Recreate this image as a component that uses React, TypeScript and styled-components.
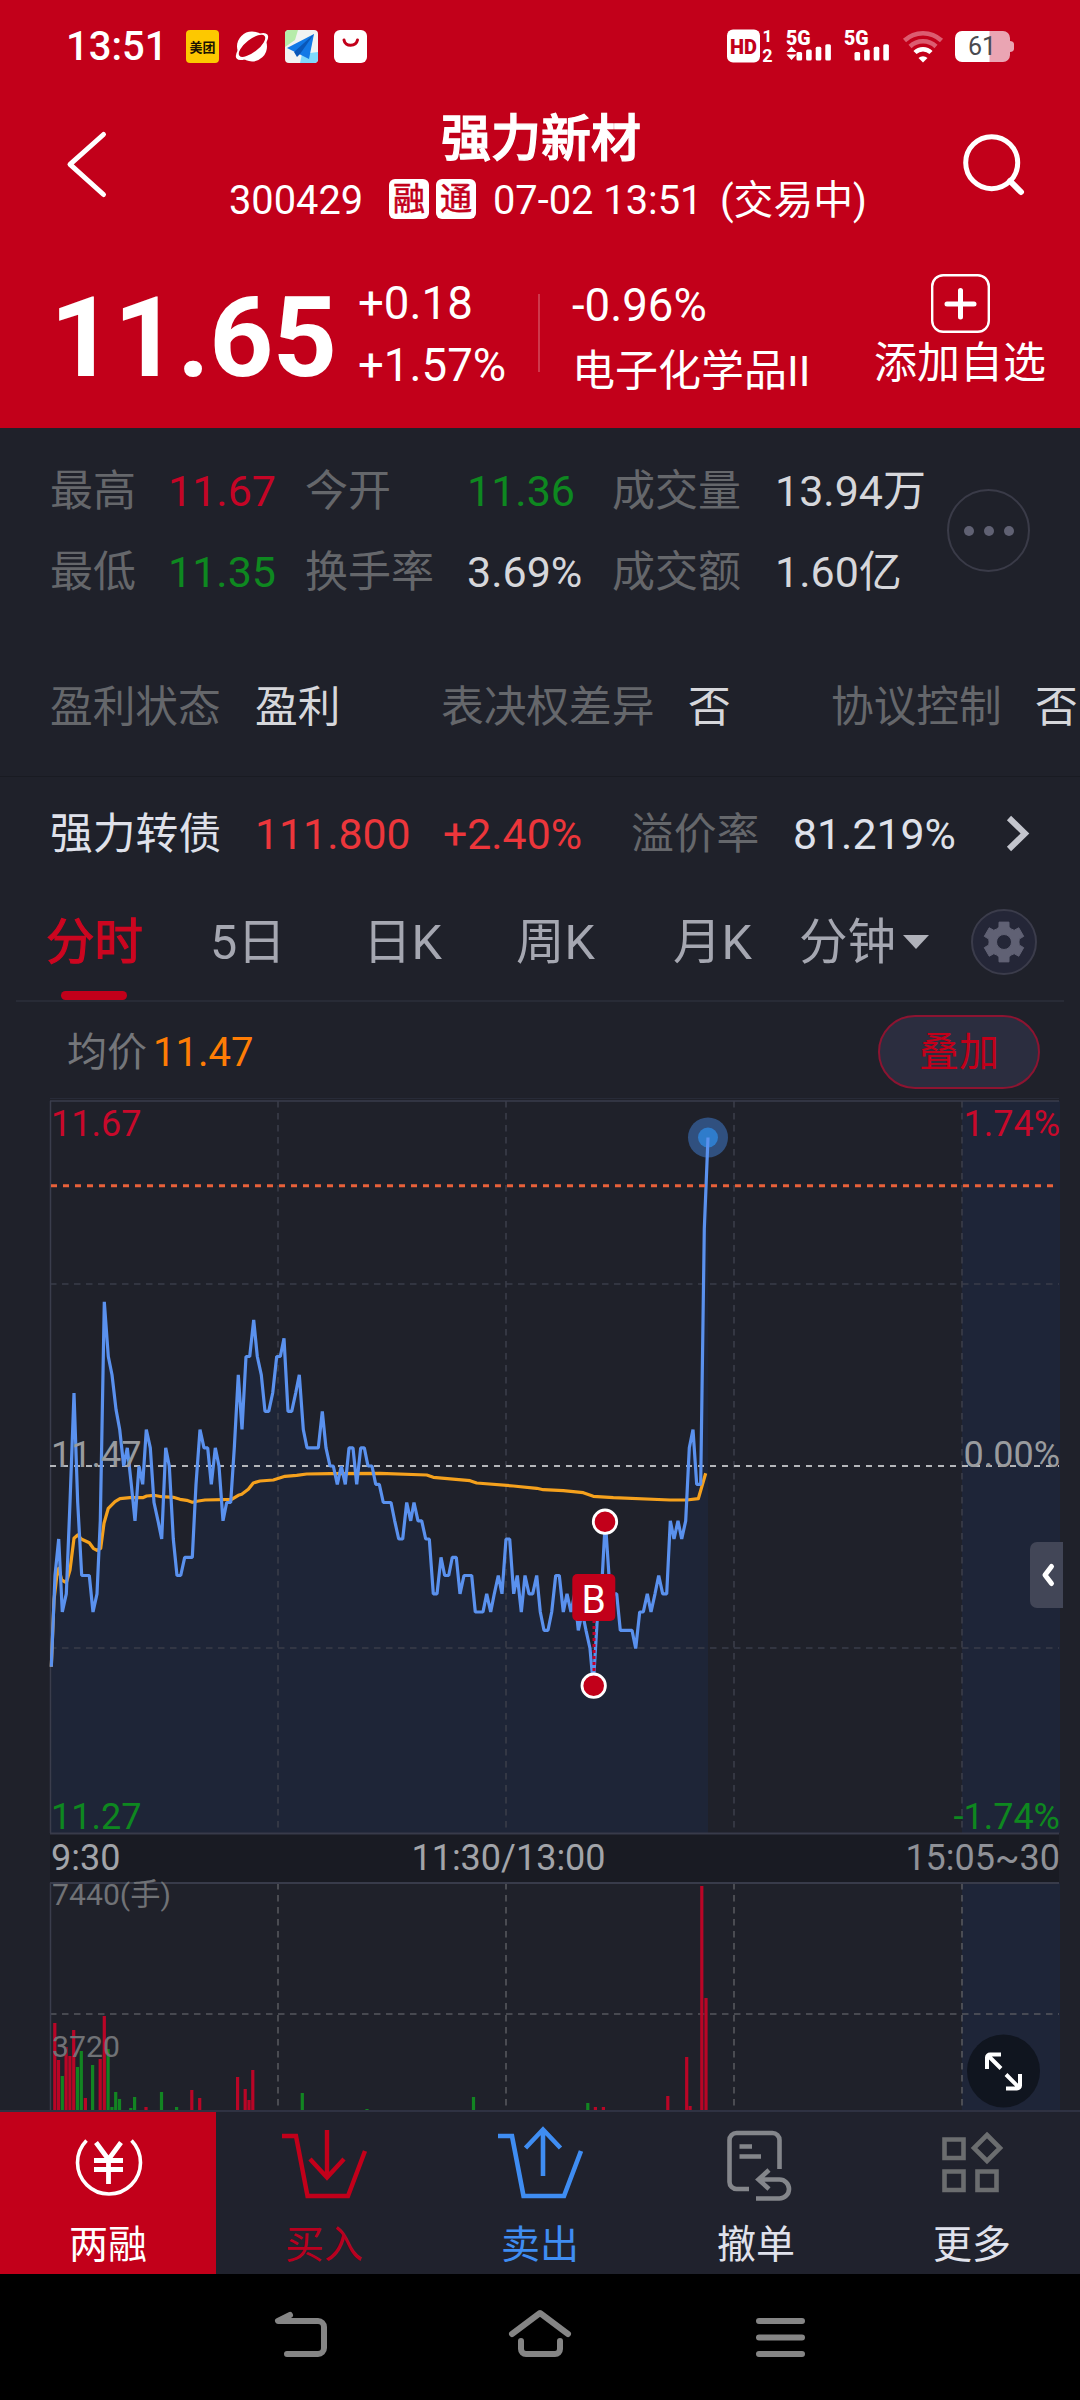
import React from "react";
import styled, { createGlobalStyle } from "styled-components";

const RED = "#c2001a";
const GREEN = "#0e8820";
const BG = "#1f212a";

const Global = createGlobalStyle`
  *, *::before, *::after { box-sizing: border-box; }
  html, body { margin: 0; padding: 0; background: #000; }
  body {
    font-family: Roboto, "Noto Sans CJK SC", sans-serif;
    -webkit-font-smoothing: antialiased;
  }
  svg { display: block; flex: none; overflow: visible; }
`;

const Screen = styled.div`
  width: 1080px;
  height: 2400px;
  display: flex;
  flex-direction: column;
  overflow: hidden;
  background: ${BG};
  color: #d9dae0;
`;

/* ---------- header ---------- */

const Header = styled.header`
  height: 428px;
  background: ${RED};
  color: #fff;
`;

const StatusBar = styled.div`
  height: 90px;
  padding: 2px 66px 0 66px;
  display: flex;
  align-items: center;
  justify-content: space-between;
`;

const StatusGroup = styled.div<{ $gap: number }>`
  display: flex;
  align-items: center;
  gap: ${(p) => p.$gap}px;
`;

const Clock = styled.span`
  width: 104px;
  font-size: 40px;
  font-weight: 500;
  line-height: 50px;
  padding-top: 1px;
`;

const TitleBar = styled.div`
  height: 150px;
  display: grid;
  grid-template-columns: 140px 800px 140px;
`;

const IconSlot = styled.button<{ $pad: string }>`
  border: 0;
  background: none;
  padding: ${(p) => p.$pad};
  display: flex;
  align-items: flex-start;
  justify-content: flex-start;
`;

const TitleBlock = styled.div`
  padding-top: 19px;
  display: flex;
  flex-direction: column;
  gap: 6px;
`;

const Title = styled.h1`
  margin: 0;
  font-size: 50px;
  line-height: 60px;
  font-weight: 500;
  text-align: center;
  padding-left: 2px;
  -webkit-text-stroke: 1.3px #fff;
`;

const SubTitle = styled.div`
  padding-left: 89px;
  display: grid;
  grid-template-columns: 160px 104px 227px 1fr;
  align-items: center;
  font-size: 39.8px;
  line-height: 50px;
  white-space: nowrap;
  & > span { padding-top: 1px; }
`;

const Badges = styled.div`
  display: flex;
  gap: 7px;
  margin-top: -4px;
`;

const Badge = styled.span`
  width: 40px;
  height: 40px;
  border-radius: 6px;
  background: #fff;
  color: ${RED};
  font-size: 32px;
  line-height: 41px;
  text-align: center;
  -webkit-text-stroke: 0.6px ${RED};
`;

const QuoteRow = styled.div`
  display: grid;
  grid-template-columns: 308px 180px 2px 331px 180px;
  padding-left: 50px;
  height: 188px;
  white-space: nowrap;
`;

const Price = styled.div`
  font-size: 112px;
  font-weight: 700;
  line-height: 120px;
  padding-top: 38px;
  letter-spacing: -0.6px;
`;

const QuoteCol = styled.div<{ $top: number; $left: number }>`
  padding: ${(p) => p.$top}px 0 0 ${(p) => p.$left}px;
  display: flex;
  flex-direction: column;
  font-size: 45.6px;
  line-height: 62px;
`;

const Industry = styled.span`
  font-size: 43px;
  line-height: 68px;
`;

const VRule = styled.div`
  margin-top: 54px;
  height: 78px;
  background: rgba(255, 255, 255, 0.22);
`;

const AddButton = styled.button`
  border: 0;
  background: none;
  color: #fff;
  font: inherit;
  font-size: 43px;
  line-height: 50px;
  padding: 34px 2px 0 0;
  display: flex;
  flex-direction: column;
  align-items: center;
  gap: 5px;
`;

/* ---------- stats ---------- */

const Stats = styled.section`
  height: 349px;
  border-bottom: 1px solid #191b22;
`;

const StatGrid = styled.div`
  padding: 22px 50px 0;
  display: grid;
  grid-template-columns: 118px 137px 162px 145px 163px 168px 1fr;
  grid-template-rows: 81px 81px;
  align-items: center;
  font-size: 43px;
  line-height: 50px;
  white-space: nowrap;
`;

const toneColor: Record<string, string> = {
  label: "#65676b",
  plain: "#d6d7db",
  up: "#c50526",
  down: GREEN,
  hot: "#ec363b",
  name: "#dfe1ea",
};

const Cell = styled.span<{ $tone: string }>`
  color: ${(p) => toneColor[p.$tone]};
`;

const MoreButton = styled.button`
  grid-column: 7;
  grid-row: 1 / 3;
  width: 83px;
  height: 83px;
  margin: -1px 0 0 4px;
  padding: 0;
  border-radius: 50%;
  border: 2px solid #3a3b48;
  background: none;
  display: flex;
  align-items: center;
  justify-content: center;
  gap: 10px;
  i { width: 10px; height: 10px; border-radius: 50%; background: #606173; }
`;

const TagRow = styled.div`
  height: 80px;
  margin-top: 55px;
  padding-left: 50px;
  display: grid;
  grid-template-columns: 205px 186px 247px 143px 204px 60px;
  align-items: center;
  font-size: 42.7px;
  line-height: 50px;
  white-space: nowrap;
`;

const BondRow = styled.section`
  height: 113px;
  padding-left: 50px;
  display: grid;
  grid-template-columns: 205px 188px 188px 162px 213px 1fr;
  align-items: center;
  font-size: 42.8px;
  line-height: 50px;
  white-space: nowrap;
`;

/* ---------- tabs ---------- */

const Tabs = styled.nav`
  height: 112px;
  margin: 0 16px;
  border-bottom: 2px solid #282b36;
  display: grid;
  grid-template-columns: 164px 153px 153px 157px 140px 156px 1fr;
  color: #a5a7b1;
  font-size: 48.5px;
  line-height: 106px;
  padding-left: 30px;
  white-space: nowrap;
`;

const Tab = styled.div<{ $active?: boolean }>`
  position: relative;
  color: ${(p) => (p.$active ? "#cc0620" : "inherit")};
  -webkit-text-stroke: ${(p) => (p.$active ? "1.2px #cc0620" : "0")};
  &::after {
    content: "";
    display: ${(p) => (p.$active ? "block" : "none")};
    position: absolute;
    left: 15px;
    bottom: 0;
    width: 66px;
    height: 9px;
    border-radius: 5px;
    background: ${RED};
  }
`;

const DropTab = styled.div`
  display: flex;
  margin-left: -14px;
`;

const Caret = styled.i`
  margin: 45px 0 0 7px;
  width: 0;
  height: 0;
  border-left: 13px solid transparent;
  border-right: 13px solid transparent;
  border-top: 14px solid #b0b2ba;
`;

const GearButton = styled.button`
  width: 66px;
  height: 66px;
  margin: 19px 0 0 2px;
  padding: 0;
  border-radius: 50%;
  border: 2px solid #3b3c4b;
  background: #242637;
  display: flex;
  align-items: center;
  justify-content: center;
`;

/* ---------- chart ---------- */

const ChartHead = styled.div`
  height: 96px;
  padding: 3px 40px 0 67px;
  display: flex;
  align-items: center;
  font-size: 40px;
  line-height: 50px;
`;

const AvgLabel = styled.span`
  width: 86px;
  padding-top: 3px;
  color: #74767a;
`;

const AvgValue = styled.span`
  flex: 1;
  padding-top: 3px;
  color: #ff7d05;
`;

const Overlay = styled.button`
  width: 162px;
  height: 74px;
  padding: 2px 0 0;
  border-radius: 37px;
  border: 2px solid #8c1431;
  background: #2b2d3f;
  color: ${RED};
  font: inherit;
`;

const ChartBox = styled.section`
  height: 1014px;
`;

const ChartText = styled.text<{ $fill: string; $size?: number }>`
  fill: ${(p) => p.$fill};
  font-size: ${(p) => p.$size ?? 36}px;
`;

/* ---------- bottom ---------- */

const ActionBar = styled.nav`
  height: 162px;
  display: grid;
  grid-template-columns: repeat(5, 1fr);
  background: #20222d;
`;

const Action = styled.button<{ $color: string; $bg?: string }>`
  border: 0;
  padding: 9px 0 0;
  background: ${(p) => p.$bg ?? "none"};
  color: ${(p) => p.$color};
  font: inherit;
  font-size: 39px;
  line-height: 50px;
  display: flex;
  flex-direction: column;
  align-items: center;
  justify-content: flex-start;
  gap: 6px;
`;

const SystemNav = styled.div`
  flex: 1;
  background: #000;
  display: flex;
  justify-content: center;
  gap: 160px;
  padding-top: 24px;
`;

/* ---------- data ---------- */

const MID = 1466;
const TICK = 18.25;

// [x, ticks above previous close]
const priceA: [number, number][] = [
  [64, -11], [75, -6], [86, -4], [97, -8], [109, -7], [120, -2], [132, 4], [143, -2], [155, -6], [178, -6],
  [189, -8], [201, -7], [211, -3], [223, 9], [235, 6], [246, 5], [258, 3.1], [269, 2], [281, 0], [292, 1],
  [304, -1], [315, -3], [327, 0], [338, -1], [349, 2], [361, 1], [372, -2], [384, -3], [395, -4], [407, 1],
  [418, 0], [430, -4], [441, -6], [452, -6], [464, -5], [487, -5], [498, -1], [510, 2], [522, 1], [533, 1],
  [544, -1], [556, 1], [567, 0], [579, -3], [590, -2], [602, -2], [613, 1], [625, 5], [636, 2], [648, 6],
  [659, 6], [671, 8], [682, 6], [694, 5], [705, 3], [716, 3], [728, 4], [740, 6], [751, 6], [762, 7],
  [774, 3], [785, 3], [797, 4], [808, 5], [820, 2], [831, 1], [865, 1], [877, 3], [888, 1], [900, 0],
  [910, 0], [922, -1], [934, 0], [946, -1], [957, 1], [969, 1], [980, -1], [992, 1], [1003, 1], [1014, 0],
  [1026, 0], [1037, -1], [1048, -1], [1060, -2],
];
const priceB: [number, number][] = [
  [33, -2], [44, -3], [56, -4], [68, -4], [80, -2], [92, -3], [102, -2], [114, -3], [125, -3], [137, -4],
  [148, -4], [160, -7], [171, -7], [183, -5], [194, -6], [206, -6], [217, -5], [229, -5], [240, -7], [252, -6],
  [275, -6], [286, -8], [309, -8], [320, -7], [332, -8], [343, -7], [355, -6], [366, -7], [378, -4], [389, -4],
  [401, -7], [412, -6], [424, -8], [435, -6], [447, -7], [458, -7], [470, -6], [481, -8], [492, -9], [504, -9],
  [515, -8], [527, -6], [538, -6], [550, -8], [561, -7], [573, -8], [584, -7], [595, -9], [607, -8], [618, -9],
  [630, -10], [640, -12], [653, -8], [664, -7], [676, -3], [687, -6], [699, -7], [710, -7], [721, -9], [756, -9],
  [767, -10], [779, -8], [790, -8], [802, -7], [813, -8], [825, -7], [836, -6], [848, -7], [860, -7], [871, -3],
  [882, -4], [894, -3], [905, -4], [917, -3], [928, 1], [939, 2], [950, -1], [962, -1], [973, 13], [984, 18],
];

const avgA: [number, number][] = [
  [64, 1160], [72, 960], [80, 890], [86, 865], [95, 900], [109, 908], [120, 870], [132, 775], [143, 765],
  [155, 778], [178, 788], [190, 805], [201, 811], [212, 805], [222, 730], [235, 685], [255, 665], [270, 656],
  [300, 653], [338, 653], [350, 648], [372, 646], [395, 650], [430, 652], [450, 658], [470, 661], [487, 667],
  [505, 663], [525, 660], [605, 658], [625, 646], [635, 643], [655, 628], [670, 609], [690, 603], [730, 600],
  [765, 589], [800, 586], [830, 582], [900, 581], [1050, 580],
];
const avgB: [number, number][] = [
  [140, 585], [160, 592], [270, 602], [290, 609], [400, 618], [470, 625], [490, 629], [550, 632], [610, 638],
  [640, 649], [700, 653], [870, 660], [920, 660], [955, 656], [977, 580],
];

const toPath = (pts: number[][]) =>
  pts.map(([x, y], i) => `${i ? "L" : "M"}${x.toFixed(1)} ${y.toFixed(1)}`).join("");

const pricePts = [
  ...priceA.map(([x, k]) => [30 + x / 3, MID - k * TICK]),
  ...priceB.map(([x, k]) => [380 + x / 3, MID - k * TICK]),
];
const avgPts = [
  ...avgA.map(([x, y]) => [30 + x / 3, 1280 + y / 3]),
  ...avgB.map(([x, y]) => [380 + x / 3, 1280 + y / 3]),
];

// [x, top, rising]
const volumes: [number, number, boolean][] = [
  [54.8, 2023, true], [58.5, 2060, true], [62.3, 2076, false], [66.1, 2047, true], [69.9, 2056, true],
  [73.7, 2030, true], [77.5, 2067, false], [81.3, 2051, false], [85.4, 2098, true], [92.6, 2065, false],
  [100.2, 2059, true], [104.3, 2016, true], [108.1, 2049, false], [111.9, 2107, false], [115.7, 2092, false],
  [119.5, 2099, false], [130.8, 2108, false], [134.6, 2097, false], [146, 2107, true], [161.5, 2092, false],
  [176.6, 2107, false], [191.8, 2090, true], [199.7, 2098, true], [237.6, 2077, true], [245.2, 2089, true],
  [249, 2100, true], [252.8, 2070, true], [302.3, 2093, false], [367, 2109, false], [473.5, 2097, false],
  [587.8, 2103, false], [595.4, 2107, true], [603.4, 2107, true], [667.8, 2096, true], [686.7, 2057, true],
  [690.1, 2106, true], [701.8, 1886, true], [706, 1998, true],
];

const VLINES = [278, 506, 734, 962];

/* ---------- drawings ---------- */

const Chart = () => (
  <svg width="1080" height="1014" viewBox="0 1098 1080 1014" fontFamily='Roboto, "Noto Sans CJK SC", sans-serif'>
    <rect x="962" y="1101" width="98" height="732" fill="#1e2538" />
    <rect x="962" y="1883" width="98" height="228" fill="#1e2538" />
    <path d={`${toPath(pricePts)}V1833H51Z`} fill="#1e2537" />
    <rect x="50" y="1834" width="1009" height="48" fill="#191b23" />
    <g stroke="#3a3d49" strokeWidth="1.6" strokeDasharray="6.5 5.5">
      {VLINES.map((x) => (
        <path key={x} d={`M${x} 1101V1833`} />
      ))}
      <path d="M50 1284H1059M50 1648H1059" />
    </g>
    <g stroke="#55575d" strokeWidth="1.6" strokeDasharray="6.5 5.5">
      {VLINES.map((x) => (
        <path key={x} d={`M${x} 1883V2110`} />
      ))}
      <path d="M50 2014H1059" />
    </g>
    <path d="M50 1098.5H1059" stroke="#282b38" />
    <path d="M50 1101H1059M50.5 1101V1833M50.5 1883V2110" stroke="#3a3d4c" strokeWidth="1.5" fill="none" />
    <path d="M50 1833.5H1059M50 1883H1059" stroke="#383b4a" strokeWidth="2" />
    <path d="M50 1466H1059" stroke="#b4b6ba" strokeWidth="2" strokeDasharray="6 6" />
    <path d={toPath(avgPts)} fill="none" stroke="#f5a11d" strokeWidth="3.2" strokeLinejoin="round" />
    <circle cx="708" cy="1137.5" r="20" fill="#30507f" />
    <circle cx="708" cy="1137.5" r="10" fill="#2f7ccb" />
    <path d={toPath(pricePts)} fill="none" stroke="#5a91ee" strokeWidth="3.2" strokeLinejoin="bevel" />
    <path d="M51 1185.7H1059" stroke="#e8613a" strokeWidth="3" strokeDasharray="6 6" />
    <ChartText $fill="#999b9e" x="51" y="1467">11.47</ChartText>
    <ChartText $fill="#c8092b" x="51" y="1135.5">11.67</ChartText>
    <ChartText $fill="#c8092b" x="1060" y="1135.5" textAnchor="end">1.74%</ChartText>
    <ChartText $fill="#999b9e" x="1060" y="1467" textAnchor="end">0.00%</ChartText>
    <ChartText $fill={GREEN} x="51" y="1829">11.27</ChartText>
    <ChartText $fill={GREEN} x="1060" y="1829" textAnchor="end">-1.74%</ChartText>
    <path d="M594 1620V1674" stroke="#c2002a" strokeWidth="3" strokeDasharray="3 3" />
    <circle cx="605" cy="1521.7" r="11.7" fill={RED} stroke="#fff" strokeWidth="2.8" />
    <circle cx="593.7" cy="1685.7" r="11.7" fill={RED} stroke="#fff" strokeWidth="2.8" />
    <rect x="572.3" y="1574" width="43" height="47" rx="5" fill={RED} />
    <ChartText $fill="#fff" $size={39} x="593.7" y="1612.5" textAnchor="middle">B</ChartText>
    <path d="M1063 1542H1037a7 7 0 0 0-7 7V1601a7 7 0 0 0 7 7H1063Z" fill="#424657" />
    <path d="M1051.5 1566.5L1045 1575L1051.5 1583.5" fill="none" stroke="#fff" strokeWidth="5" strokeLinecap="round" strokeLinejoin="round" />
    <ChartText $fill="#a2a4a9" x="51" y="1869.5">9:30</ChartText>
    <ChartText $fill="#a2a4a9" x="508.5" y="1869.5" textAnchor="middle">11:30/13:00</ChartText>
    <ChartText $fill="#8f9197" x="1060" y="1869.5" textAnchor="end">15:05~30</ChartText>
    {volumes.map(([x, y, up]) => (
      <rect key={x} x={x - 1.6} y={y} width="3.2" height={2111 - y} fill={up ? "#b90526" : "#128522"} />
    ))}
    <ChartText $fill="#707276" $size={30.2} x="52" y="1905">7440(手)</ChartText>
    <ChartText $fill="#707276" $size={30.2} x="52" y="2057">3720</ChartText>
    <circle cx="1003.5" cy="2071" r="36.5" fill="#10151f" />
    <path
      d="M1001 2068.5L987 2054.5M1001 2054.5H990a3 3 0 0 0-3 3V2069M1006 2074.5L1020 2088.5M1006 2088.5H1017a3 3 0 0 0 3-3V2074"
      fill="none"
      stroke="#fff"
      strokeWidth="4"
    />
    <path d="M0 2111H1080" stroke="#2f3242" strokeWidth="2" />
  </svg>
);

const Meituan = () => (
  <svg width="33" height="33">
    <rect width="33" height="33" rx="4" fill="#fdc800" />
    <text x="16.5" y="21.5" fontSize="13" fontWeight="700" textAnchor="middle" fill="#1a1200" fontFamily='"Noto Sans CJK SC", sans-serif'>
      美团
    </text>
  </svg>
);

const Planet = () => (
  <svg width="34" height="33" viewBox="0 0 34 33">
    <circle cx="17" cy="16.5" r="15" fill="#fff" />
    <ellipse cx="17" cy="16.5" rx="19.5" ry="8" transform="rotate(-38 17 16.5)" fill="#fff" />
    <ellipse cx="17" cy="15.8" rx="16" ry="6.4" transform="rotate(-38 17 15.8)" fill={RED} />
  </svg>
);

const Maps = () => (
  <svg width="33" height="33" viewBox="0 0 33 33">
    <rect width="33" height="33" rx="4" fill="#f1f3f2" />
    <path d="M4 0H13L10 10L0 17V4A4 4 0 0 1 4 0Z" fill="#b6ecaa" />
    <path d="M17 24L33 22V29a4 4 0 0 1-4 4H15Z" fill="#7fd8fb" />
    <path d="M29 4L2 18L24 29Z" fill="#1379e6" />
    <path d="M29 4L9 22L12 27L15 24Z" fill="#0a57b8" />
  </svg>
);

const Bag = () => (
  <svg width="33" height="33" viewBox="0 0 33 33">
    <rect width="33" height="33" rx="6" fill="#fff" />
    <path d="M10 10C11 17 22 17 23.5 10" fill="none" stroke={RED} strokeWidth="3" strokeLinecap="round" />
  </svg>
);

const Hd = () => (
  <svg width="48" height="40" viewBox="0 -3.5 48 40" fontFamily="Roboto, sans-serif" fontWeight="700" fill="#fff">
    <rect width="33" height="33" rx="6" />
    <text x="16.5" y="24" fontSize="21" fontWeight="900" textAnchor="middle" fill={RED} textLength="27" lengthAdjust="spacingAndGlyphs">HD</text>
    <text x="40.5" y="12.5" fontSize="17" textAnchor="middle">1</text>
    <text x="40.5" y="32" fontSize="18" textAnchor="middle">2</text>
  </svg>
);

const Signal = ({ arrows }: { arrows?: boolean }) => (
  <svg width="46" height="40" viewBox="1 -3.5 46 40" fill="#fff">
    <text x="0" y="15" fontSize="19.5" fontWeight="900" fontFamily="Roboto, sans-serif">5G</text>
    {arrows && <path d="M0.5 22.5L5.5 17L10.5 22.5ZM0.5 25L5.5 30.5L10.5 25Z" />}
    {[0, 1, 2, 3].map((i) => (
      <rect key={i} x={10.5 + i * 9.6} y={22.5 - i * 2.6} width="5.6" height={8.5 + i * 2.6} rx="1.5" />
    ))}
  </svg>
);

const Wifi = () => (
  <svg width="40" height="33" viewBox="0 0 40 33" fill="none" strokeWidth="4.5">
    <path d="M1.5 10.5A27 27 0 0 1 38.5 10.5M7 16.5A19 19 0 0 1 33 16.5" stroke="#dc5c70" />
    <path d="M12 22.5A11.5 11.5 0 0 1 28 22.5" stroke="#fff" />
    <path d="M20 32.5L15.5 28A6.5 6.5 0 0 1 24.5 28Z" fill="#fff" />
  </svg>
);

const Battery = () => (
  <svg width="59" height="31" viewBox="0 0 59 31">
    <path d="M34 0H48a7 7 0 0 1 7 7V10c2 0 4 1 4 3V18c0 2-2 3-4 3V24a7 7 0 0 1-7 7H34Z" fill="#eaa5b3" />
    <path d="M34.5 0H7a7 7 0 0 0-7 7V24a7 7 0 0 0 7 7H34.500Z" fill="#fff" />
    <text x="27" y="24.3" fontSize="25" textAnchor="middle" fill="#4a4a50" fontFamily="Roboto, sans-serif">61</text>
  </svg>
);

const BackIcon = () => (
  <svg width="44" height="70" viewBox="65 129 44 70" fill="none" stroke="#fff" strokeWidth="5" strokeLinecap="round" strokeLinejoin="round">
    <path d="M103.5 134.5L70 164.3L103.5 194.5" />
  </svg>
);

const SearchIcon = () => (
  <svg width="64" height="66" viewBox="962 132 64 66" fill="none" stroke="#fff" strokeWidth="5">
    <circle cx="991.7" cy="162.7" r="26" />
    <path d="M1010 181L1021 192" strokeWidth="6" strokeLinecap="round" />
  </svg>
);

const PlusBox = () => (
  <svg width="59" height="59" viewBox="0 0 59 59" fill="none" stroke="#fff">
    <rect x="1.2" y="1.2" width="56.6" height="56.6" rx="11" strokeWidth="2.4" />
    <path d="M16 30H43M29.500 16.500V43" strokeWidth="5" strokeLinecap="round" />
  </svg>
);

const gearPath = (() => {
  const pts: string[] = [];
  for (let i = 0; i < 6; i++) {
    const base = (i * 60 - 90) * (Math.PI / 180);
    const pairs: [number, number][] = [[-29, 15], [-19, 15.5], [-14, 20.5], [14, 20.5], [19, 15.5], [29, 15]];
    pairs.forEach(([deg, r]) => {
      const a = base + (deg * Math.PI) / 180;
      pts.push(`${(21 + r * Math.cos(a)).toFixed(2)} ${(21 + r * Math.sin(a)).toFixed(2)}`);
    });
  }
  return `M${pts.join("L")}Z`;
})();

const Gear = () => (
  <svg width="42" height="42" viewBox="0 0 42 42">
    <path fillRule="evenodd" d={`${gearPath}M13.5 21a7.5 7.5 0 1 0 15 0a7.5 7.5 0 1 0-15 0Z`} fill="#606174" stroke="#606174" strokeLinejoin="round" />
  </svg>
);

const iconProps = { width: 100, height: 93, fill: "none" };

const YenIcon = () => (
  <svg {...iconProps} viewBox="59 2121 100 93" stroke="#fff" strokeWidth="3.6">
    <path d="M87.5 2140.500A31.500 31.500 0 1 0 132.500 2140.500" />
    <path d="M97 2142.5L109.5 2159.5L122 2142.5M95 2160.5H124M95 2169.5H124M109.5 2159V2184" strokeWidth="4.8" />
  </svg>
);

const BuyIcon = () => (
  <svg {...iconProps} viewBox="274 2121 100 93" stroke={RED} strokeWidth="4.4">
    <path d="M282 2136H296L307.5 2196H348L365 2151" />
    <path d="M327 2130V2177M310 2159L327 2177.5L344 2159" />
  </svg>
);

const SellIcon = () => (
  <svg {...iconProps} viewBox="490 2121 100 93" stroke="#3f8df2" strokeWidth="4.6">
    <path d="M498 2136H512L523.5 2196H564L581 2151" />
    <path d="M543 2176V2130M525.5 2148L543 2129.5L560.5 2148" />
  </svg>
);

const CancelIcon = () => (
  <svg {...iconProps} viewBox="706 2121 100 93" stroke="#84868b" strokeWidth="4.6">
    <path d="M779.5 2169V2140a7 7 0 0 0-7-7H736.5a7 7 0 0 0-7 7V2182a7 7 0 0 0 7 7H749" />
    <path d="M739.5 2146.5H752M739.5 2156.5H761" />
    <path d="M769 2170L758.5 2179.5L769 2189M759 2179.5H779.5a9.5 9.5 0 0 1 0 19H756" />
  </svg>
);

const MoreIcon = () => (
  <svg {...iconProps} viewBox="922 2121 100 93" stroke="#6b6d6f" strokeWidth="4.6">
    <path d="M944.500 2139.500H963.500V2158H944.500ZM944.500 2171.500H963.500V2190H944.500ZM977.500 2171.500H996.500V2190H977.500ZM987 2135L1000 2148L987 2161L974 2148Z" />
  </svg>
);

const navProps = { width: 80, height: 80, fill: "none", stroke: "#858585", strokeWidth: 6 } as const;

const stats: [string, string, string][][] = [
  [["最高", "11.67", "up"], ["今开", "11.36", "down"], ["成交量", "13.94万", "plain"]],
  [["最低", "11.35", "down"], ["换手率", "3.69%", "plain"], ["成交额", "1.60亿", "plain"]],
];

const tags = [["盈利状态", "盈利"], ["表决权差异", "否"], ["协议控制", "否"]];

export default function App() {
  return (
    <Screen>
      <Global />
      <Header>
        <StatusBar>
          <StatusGroup $gap={16}>
            <Clock>13:51</Clock>
            <Meituan />
            <Planet />
            <Maps />
            <Bag />
          </StatusGroup>
          <StatusGroup $gap={12}>
            <Hd />
            <Signal arrows />
            <Signal />
            <Wifi />
            <Battery />
          </StatusGroup>
        </StatusBar>
        <TitleBar>
          <IconSlot $pad="39px 0 0 65px"><BackIcon /></IconSlot>
          <TitleBlock>
            <Title>强力新材</Title>
            <SubTitle>
              <span>300429</span>
              <Badges>
                <Badge>融</Badge>
                <Badge>通</Badge>
              </Badges>
              <span>07-02 13:51</span>
              <span>(交易中)</span>
            </SubTitle>
          </TitleBlock>
          <IconSlot $pad="42px 0 0 22px"><SearchIcon /></IconSlot>
        </TitleBar>
        <QuoteRow>
          <Price>11.65</Price>
          <QuoteCol $top={33} $left={0}>
            <span>+0.18</span>
            <span>+1.57%</span>
          </QuoteCol>
          <VRule />
          <QuoteCol $top={35} $left={32}>
            <span>-0.96%</span>
            <Industry>电子化学品II</Industry>
          </QuoteCol>
          <AddButton>
            <PlusBox />
            添加自选
          </AddButton>
        </QuoteRow>
      </Header>

      <Stats>
        <StatGrid>
          {stats.map((row) =>
            row.map(([label, value, tone]) => (
              <React.Fragment key={label}>
                <Cell $tone="label">{label}</Cell>
                <Cell $tone={tone}>{value}</Cell>
              </React.Fragment>
            ))
          )}
          <MoreButton><i /><i /><i /></MoreButton>
        </StatGrid>
        <TagRow>
          {tags.map(([label, value]) => (
            <React.Fragment key={label}>
              <Cell $tone="label">{label}</Cell>
              <Cell $tone="plain">{value}</Cell>
            </React.Fragment>
          ))}
        </TagRow>
      </Stats>

      <BondRow>
        <Cell $tone="name">强力转债</Cell>
        <Cell $tone="hot">111.800</Cell>
        <Cell $tone="hot">+2.40%</Cell>
        <Cell $tone="label">溢价率</Cell>
        <Cell $tone="name">81.219%</Cell>
        <svg width="26" height="36" viewBox="0 0 26 36" fill="none" stroke="#c3c5cd" strokeWidth="6">
          <path d="M3 2L19 17.5L3 33" />
        </svg>
      </BondRow>

      <Tabs>
        <Tab $active>分时</Tab>
        <Tab>5日</Tab>
        <Tab>日K</Tab>
        <Tab>周K</Tab>
        <Tab>月K</Tab>
        <DropTab>分钟<Caret /></DropTab>
        <GearButton><Gear /></GearButton>
      </Tabs>

      <ChartHead>
        <AvgLabel>均价</AvgLabel>
        <AvgValue>11.47</AvgValue>
        <Overlay>叠加</Overlay>
      </ChartHead>
      <ChartBox>
        <Chart />
      </ChartBox>

      <ActionBar>
        <Action $color="#fff" $bg={RED}><YenIcon />两融</Action>
        <Action $color="#b8001f"><BuyIcon />买入</Action>
        <Action $color="#3f8df2"><SellIcon />卖出</Action>
        <Action $color="#e0e2ec"><CancelIcon />撤单</Action>
        <Action $color="#e0e2ec"><MoreIcon />更多</Action>
      </ActionBar>

      <SystemNav>
        <svg {...navProps} viewBox="260 2298 80 80" strokeLinecap="round" strokeLinejoin="round">
          <path d="M290 2315L278 2321H318a6 6 0 0 1 6 6V2348a6 6 0 0 1-6 6H287" />
        </svg>
        <svg {...navProps} viewBox="500 2298 80 80" strokeLinecap="round" strokeLinejoin="round">
          <path d="M512 2334L540 2313L568 2334M521 2341V2349a5 5 0 0 0 5 5H555a5 5 0 0 0 5-5V2341" />
        </svg>
        <svg {...navProps} viewBox="740 2298 80 80" strokeLinecap="round">
          <path d="M759 2321H802M759 2337.5H802M759 2354H802" />
        </svg>
      </SystemNav>
    </Screen>
  );
}
